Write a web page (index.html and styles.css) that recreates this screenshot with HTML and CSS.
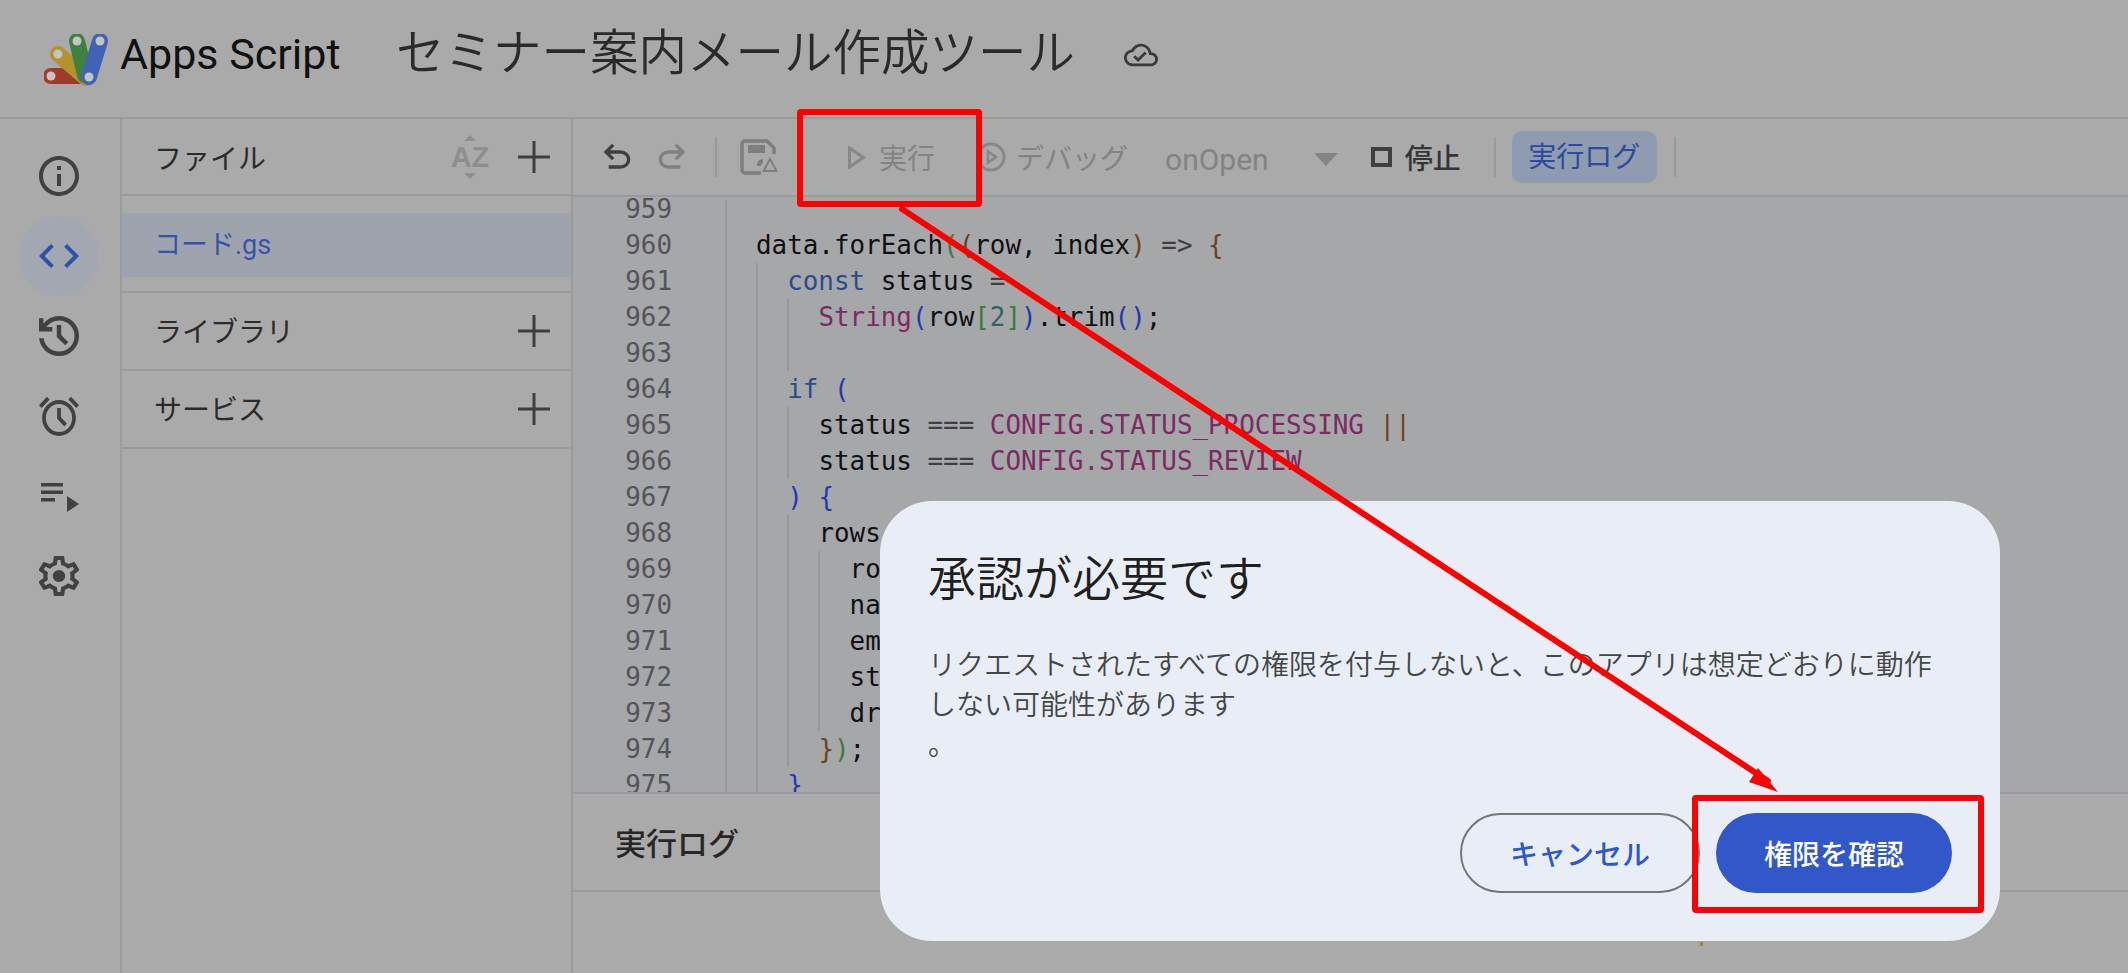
FILE: index.html
```html
<!DOCTYPE html>
<html lang="ja">
<head>
<meta charset="utf-8">
<title>Apps Script</title>
<link rel="stylesheet" href="styles.css">
</head>
<body>
<div class="app">
  <header class="topbar">
    <svg class="logo" viewBox="44 33 64 52" width="64" height="52">
      <path d="M51 75H86" stroke="#a03a2f" stroke-width="16" stroke-linecap="round"/>
      <path d="M58 53L86 77" stroke="#b3932e" stroke-width="16" stroke-linecap="round"/>
      <path d="M77 40L85 74" stroke="#3f8043" stroke-width="16" stroke-linecap="round"/>
      <path d="M100 40L89 76" stroke="#4263b5" stroke-width="16" stroke-linecap="round"/>
      <circle cx="51" cy="75" r="4.5" fill="#c4c4c4"/><circle cx="58" cy="53" r="4.5" fill="#c4c4c4"/>
      <circle cx="77" cy="40" r="4.5" fill="#c4c4c4"/><circle cx="100" cy="40" r="4.5" fill="#c4c4c4"/>
      <circle cx="89" cy="76" r="4.5" fill="#c4c4c4"/>
    </svg>
    <span class="appname">Apps Script</span>
    <h1 class="doctitle">セミナー案内メール作成ツール</h1>
    <svg class="cloud" viewBox="0 0 24 24" width="34" height="34"><path d="M19.35 10.04C18.67 6.59 15.64 4 12 4 9.11 4 6.6 5.64 5.35 8.04 2.34 8.36 0 10.91 0 14c0 3.31 2.69 6 6 6h13c2.76 0 5-2.24 5-5 0-2.64-2.05-4.78-4.65-4.96zM19 18H6c-2.21 0-4-1.79-4-4 0-2.05 1.53-3.76 3.56-3.97l1.07-.11.5-.95C8.08 7.14 9.94 6 12 6c2.62 0 4.88 1.86 5.39 4.43l.3 1.5 1.53.11c1.56.1 2.78 1.41 2.78 2.96 0 1.65-1.35 3-3 3zm-9-3.82l-2.09-2.09L6.5 13.5 10 17l6.01-6.01-1.41-1.41z"/></svg>
  </header>

  <div class="main">
    <nav class="rail">
      <svg class="rail-icon" viewBox="2 2 20 20"><path d="M11 7h2v2h-2zm0 4h2v6h-2zm1-9C6.48 2 2 6.48 2 12s4.48 10 10 10 10-4.48 10-10S17.52 2 12 2zm0 18c-4.41 0-8-3.59-8-8s3.59-8 8-8 8 3.59 8 8-3.59 8-8 8z"/></svg>
      <div class="rail-active"><svg class="rail-icon code-icon" viewBox="2 6 20 12"><path d="M9.4 16.6L4.8 12l4.6-4.6L8 6l-6 6 6 6 1.4-1.4zm5.2 0l4.6-4.6-4.6-4.6L16 6l6 6-6 6-1.4-1.4z"/></svg></div>
      <svg class="rail-icon" viewBox="3 3 18 18"><path d="M12 21q-3.45 0-6.012-2.288T3.05 13H5.1q.35 2.6 2.313 4.3T12 19q2.925 0 4.963-2.038T19 12q0-2.925-2.038-4.963T12 5q-1.725 0-3.225.8T6.25 8H9v2H3V4h2v2.35q1.275-1.6 3.113-2.475T12 3q3.75 0 6.375 2.625T21 12q0 3.75-2.625 6.375T12 21Zm2.8-4.8L11 12.4V7h2v4.6l3.2 3.2-1.4 1.4Z"/></svg>
      <svg class="rail-icon" viewBox="1.35 2 21.3 20" preserveAspectRatio="none"><path d="M12 22q-1.875 0-3.512-.712t-2.85-1.925q-1.213-1.213-1.925-2.85T3 13q0-1.875.713-3.513t1.925-2.85q1.212-1.212 2.85-1.925T12 4q1.875 0 3.513.712t2.85 1.925q1.212 1.213 1.925 2.85T21 13q0 1.875-.712 3.513t-1.925 2.85q-1.213 1.212-2.85 1.925T12 22Zm2.8-4.8 1.4-1.4-3.2-3.2V8h-2v5.4l3.8 3.8ZM5.6 2.35 7 3.75 2.75 8 1.35 6.6 5.6 2.35Zm12.8 0 4.25 4.25L21.25 8 17 3.75l1.4-1.4ZM12 20q2.925 0 4.963-2.037T19 13q0-2.925-2.037-4.963T12 6Q9.075 6 7.037 8.037T5 13q0 2.925 2.038 4.963T12 20Z"/></svg>
      <svg class="rail-icon" viewBox="0 0 40 40"><path d="M2 7h22v3.500H2zM2 14.500h22v3.500H2zM2 22h14v3.500H2zM28 20l12 8-12 8z"/></svg>
      <svg class="rail-icon" viewBox="2.4 2 19.200 20" preserveAspectRatio="none"><path d="M19.43 12.98c.04-.32.07-.64.07-.98 0-.34-.03-.66-.07-.98l2.11-1.65c.19-.15.24-.42.12-.64l-2-3.46c-.09-.16-.26-.25-.44-.25-.06 0-.12.01-.17.03l-2.49 1c-.52-.4-1.08-.73-1.69-.98l-.38-2.65C14.46 2.18 14.25 2 14 2h-4c-.25 0-.46.18-.49.42l-.38 2.65c-.61.25-1.17.59-1.69.98l-2.49-1c-.06-.02-.12-.03-.18-.03-.17 0-.34.09-.43.25l-2 3.46c-.13.22-.07.49.12.64l2.11 1.65c-.04.32-.07.65-.07.98 0 .33.03.66.07.98l-2.11 1.65c-.19.15-.24.42-.12.64l2 3.46c.09.16.26.25.44.25.06 0 .12-.01.17-.03l2.49-1c.52.4 1.08.73 1.69.98l.38 2.65c.03.24.24.42.49.42h4c.25 0 .46-.18.49-.42l.38-2.65c.61-.25 1.17-.59 1.69-.98l2.49 1c.06.02.12.03.18.03.17 0 .34-.09.43-.25l2-3.46c.12-.22.07-.49-.12-.64l-2.11-1.65zm-1.98-1.71c.04.31.05.52.05.73 0 .21-.02.43-.05.73l-.14 1.13.89.7 1.08.84-.7 1.21-1.27-.51-1.04-.42-.9.68c-.43.32-.84.56-1.25.73l-1.06.43-.16 1.13-.2 1.35h-1.4l-.19-1.35-.16-1.13-1.06-.43c-.43-.18-.83-.41-1.23-.71l-.91-.7-1.06.43-1.27.51-.7-1.21 1.08-.84.89-.7-.14-1.13c-.03-.31-.05-.54-.05-.74s.02-.43.05-.73l.14-1.13-.89-.7-1.08-.84.7-1.21 1.27.51 1.04.42.9-.68c.43-.32.84-.56 1.25-.73l1.06-.43.16-1.13.2-1.35h1.39l.19 1.35.16 1.13 1.06.43c.43.18.83.41 1.23.71l.91.7 1.06-.43 1.27-.51.7 1.21-1.07.85-.89.7.14 1.13z"/><circle cx="12" cy="12" r="3"/></svg>
    </nav>

    <aside class="files">
      <div class="panel-head files-head">
        <span class="panel-title">ファイル</span>
        <span class="az"><i class="az-up"></i><b>AZ</b><i class="az-down"></i></span>
        <svg class="plus" viewBox="0 0 32 32"><path d="M14.500 0h3v14.500H32v3H17.500V32h-3V17.500H0v-3h14.500z"/></svg>
      </div>
      <div class="file-list"><div class="file-row">コード.gs</div></div>
      <div class="panel-head section">
        <span class="panel-title">ライブラリ</span>
        <svg class="plus" viewBox="0 0 32 32"><path d="M14.500 0h3v14.500H32v3H17.500V32h-3V17.500H0v-3h14.500z"/></svg>
      </div>
      <div class="panel-head section">
        <span class="panel-title">サービス</span>
        <svg class="plus" viewBox="0 0 32 32"><path d="M14.500 0h3v14.500H32v3H17.500V32h-3V17.500H0v-3h14.500z"/></svg>
      </div>
    </aside>

    <section class="editor">
      <div class="toolbar">
        <svg class="tool undo" viewBox="0 0 24 24"><path d="M7 19v-2h7.100q1.575 0 2.738-1T18 13.500q0-1.500-1.162-2.500T14.100 10H7.800l2.600 2.600L9 14 4 9l5-5 1.400 1.400L7.800 8h6.300q2.425 0 4.163 1.575T20 13.500q0 2.350-1.737 3.925T14.100 19H7Z"/></svg>
        <svg class="tool redo" viewBox="0 0 24 24"><path d="M9.900 19q-2.425 0-4.162-1.575T4 13.500q0-2.350 1.738-3.925T9.900 8h6.300l-2.600-2.600L15 4l5 5-5 5-1.400-1.400 2.600-2.600H9.900q-1.575 0-2.738 1T6 13.500Q6 15 7.163 16T9.900 17H17v2H9.900Z"/></svg>
        <i class="tool-div first"></i>
        <svg class="save" viewBox="0 0 38 36" width="38" height="36">
          <path d="M21 34H5a3 3 0 0 1-3-3V5a3 3 0 0 1 3-3h22l7 7v6" fill="none" stroke="#7e7e7e" stroke-width="3.500"/>
          <rect x="8" y="6" width="17" height="8" fill="#7e7e7e"/>
          <path d="M17 27a6 6 0 0 1 6-7v4a3 3 0 0 0-2 3z" fill="#7e7e7e"/>
          <path d="M30 20l6.500 12h-13z" fill="none" stroke="#7e7e7e" stroke-width="2"/>
        </svg>
        <svg class="play" viewBox="0 0 18 23" width="18" height="23"><path d="M1.500 2l14 9.500-14 9.500z" fill="none" stroke="#878787" stroke-width="3"/></svg>
        <span class="tool-label run">実行</span>
        <svg class="debug" viewBox="0 0 30 30" width="30" height="30"><circle cx="15" cy="15" r="13" fill="none" stroke="#878787" stroke-width="3"/><path d="M12 9.500l8 5.500-8 5.500z" fill="none" stroke="#878787" stroke-width="2.500"/></svg>
        <span class="tool-label dbg">デバッグ</span>
        <span class="tool-label fn">onOpen</span>
        <i class="caret"></i>
        <i class="stop-box"></i>
        <span class="tool-label stop">停止</span>
        <i class="tool-div second"></i>
        <span class="log-toggle">実行ログ</span>
        <i class="tool-div third"></i>
      </div>

      <div class="code-view">
        <div class="gutter">
          <div>959</div><div>960</div><div>961</div><div>962</div><div>963</div><div>964</div><div>965</div><div>966</div><div>967</div><div>968</div><div>969</div><div>970</div><div>971</div><div>972</div><div>973</div><div>974</div><div>975</div>
        </div>
        <div class="lines">
          <div class="ln ln-first"></div>
          <div class="ln">data.forEach<span class="grn">(</span><span class="bwn">(</span>row, index<span class="bwn">)</span> <span class="op">=&gt;</span> <span class="bwn">{</span></div>
          <div class="ln"><i class="g"></i><span class="kw">const</span> status <span class="op">=</span></div>
          <div class="ln"><i class="g"></i><i class="g"></i><span class="fn-c">String</span><span class="blu">(</span>row<span class="grn">[</span><span class="num">2</span><span class="grn">]</span><span class="blu">)</span>.trim<span class="blu">()</span>;</div>
          <div class="ln"><i class="g"></i><i class="g"></i></div>
          <div class="ln"><i class="g"></i><span class="kw">if</span> <span class="blu">(</span></div>
          <div class="ln"><i class="g"></i><i class="g"></i>status <span class="op">===</span> <span class="fn-c">CONFIG.STATUS_PROCESSING</span> <span class="bwn">||</span></div>
          <div class="ln"><i class="g"></i><i class="g"></i>status <span class="op">===</span> <span class="fn-c">CONFIG.STATUS_REVIEW</span></div>
          <div class="ln"><i class="g"></i><span class="blu">)</span> <span class="blu">{</span></div>
          <div class="ln"><i class="g"></i><i class="g"></i>rows</div>
          <div class="ln"><i class="g"></i><i class="g"></i><i class="g"></i>ro</div>
          <div class="ln"><i class="g"></i><i class="g"></i><i class="g"></i>na</div>
          <div class="ln"><i class="g"></i><i class="g"></i><i class="g"></i>em</div>
          <div class="ln"><i class="g"></i><i class="g"></i><i class="g"></i>st</div>
          <div class="ln"><i class="g"></i><i class="g"></i><i class="g"></i>dr</div>
          <div class="ln"><i class="g"></i><i class="g"></i><span class="bwn">}</span><span class="grn">)</span>;</div>
          <div class="ln"><i class="g"></i><span class="blu">}</span></div>
        </div>
      </div>

      <div class="log-panel">
        <div class="log-head">実行ログ</div>
        <div class="log-body"><i class="log-mark"></i></div>
      </div>
    </section>
  </div>

  <div class="dialog">
    <h2 class="dialog-title">承認が必要です</h2>
    <p class="dialog-text">リクエストされたすべての権限を付与しないと、このアプリは想定どおりに動作<br>しない可能性があります<br>。</p>
    <div class="dialog-actions">
      <button class="btn btn-outline">キャンセル</button>
      <button class="btn btn-primary">権限を確認</button>
    </div>
  </div>

  <svg class="annot" viewBox="0 0 2128 973" width="2128" height="973">
    <rect class="box" x="800" y="112" width="179" height="92" rx="1"/>
    <rect class="box" x="1695" y="798" width="286" height="112" rx="1"/>
    <path class="arrow-line" d="M902 209L1768 781"/>
    <path class="arrow-head" d="M1778 792L1749 782 1758 768z"/>
  </svg>
</div>
</body>
</html>
```
FILE: styles.css
```css
* { box-sizing: border-box; }
html, body { margin: 0; height: 100%; }
body {
  background: #aaaaaa;
  color: #2b2b2b;
  font-family: Roboto, "Noto Sans CJK JP", sans-serif;
  overflow: hidden;
}
.app {
  position: relative;
  width: 2128px;
  height: 973px;
  display: flex;
  flex-direction: column;
  overflow: hidden;
}

/* header */
.topbar {
  height: 119px;
  flex: none;
  display: flex;
  align-items: center;
  padding-left: 44px;
  border-bottom: 2px solid #9a9b9f;
}
.logo { flex: none; fill: none; margin-top: 2px; }
.appname {
  margin-left: 12px;
  margin-top: -9px;
  width: 276px;
  font-size: 43px;
  color: #111;
}
.doctitle {
  margin: -20px 0 0 0;
  width: 728px;
  font-size: 48.500px;
  font-weight: 350;
  color: #2a2a2a;
  white-space: nowrap;
}
.cloud { flex: none; fill: #3a3a3c; margin-top: -8px; }

/* layout */
.main { flex: 1; display: flex; min-height: 0; }

/* rail */
.rail {
  width: 122px;
  flex: none;
  border-right: 2px solid #9a9b9f;
  display: flex;
  flex-direction: column;
  align-items: center;
  padding-right: 2px;
  padding-top: 37px;
}
.rail-icon { width: 40px; height: 40px; fill: #414144; flex: none; margin-bottom: 40px; }
.rail > .rail-icon:first-child { margin-bottom: 20px; }
.rail-active {
  width: 80px;
  height: 80px;
  border-radius: 50%;
  background: #a2a7b2;
  display: flex;
  align-items: center;
  justify-content: center;
  margin-bottom: 20px;
  flex: none;
}
.rail-active .code-icon { margin: 0; fill: #2f50a8; height: 24px; }

/* files panel */
.files {
  width: 451px;
  flex: none;
  border-right: 2px solid #9a9b9f;
}
.panel-head {
  display: flex;
  align-items: center;
  padding: 0 21px 0 32px;
  height: 78px;
  border-bottom: 2px solid #9a9b9f;
}
.files-head { height: 77px; }
.panel-title { font-size: 28px; color: #2b2b2b; flex: 1; margin-top: -2px; }
.files-head .panel-title { margin-top: 0; }
.plus { width: 32px; height: 32px; fill: #3f3f42; flex: none; }
.az {
  width: 40px;
  margin-right: 28px;
  display: flex;
  flex-direction: column;
  align-items: center;
  color: #8e8e8f;
}
.az b { font: 700 29px/24px "Liberation Sans", sans-serif; }
.az-up, .az-down { width: 0; height: 0; border-left: 6px solid transparent; border-right: 6px solid transparent; }
.az-up { border-bottom: 6px solid #8e8e8f; margin-bottom: 4px; }
.az-down { border-top: 6px solid #8e8e8f; margin-top: 4px; }
.file-list { padding: 17px 0 14px; border-bottom: 2px solid #9a9b9f; }
.file-row {
  height: 64px;
  line-height: 65px;
  padding-left: 32px;
  background: #9fa3ae;
  color: #3854a8;
  font-size: 27px;
}

/* editor */
.editor { flex: 1; min-width: 0; display: flex; flex-direction: column; }
.toolbar {
  height: 78px;
  flex: none;
  display: flex;
  align-items: center;
  border-bottom: 2px solid #9a9b9f;
}
.tool { width: 40px; height: 40px; flex: none; }
.undo { fill: #3f3f42; margin-left: 24px; }
.redo { fill: #808082; margin-left: 15px; }
.tool-div { width: 2px; height: 40px; background: #98999c; flex: none; }
.tool-div.first { margin-left: 23px; }
.save { flex: none; margin-left: 23px; }
.play { flex: none; margin-left: 70px; }
.debug { flex: none; margin-left: 41px; }
.tool-label { font-size: 28px; color: #838383; white-space: nowrap; flex: none; line-height: 40px; margin-top: 6px; }
.run { margin-left: 13px; }
.dbg { margin-left: 10px; }
.fn { margin-left: 37px; font-size: 30px; }
.caret {
  width: 0; height: 0; flex: none;
  margin-left: 45px;
  border-left: 12px solid transparent;
  border-right: 12px solid transparent;
  border-top: 13px solid #858585;
  margin-top: 4px;
}
.stop-box { width: 21px; height: 20px; border: 4px solid #3f3f42; flex: none; margin-left: 33px; }
.stop { margin-left: 13px; color: #353537; font-weight: 500; }
.tool-div.second { margin-left: 33px; }
.log-toggle {
  margin-left: 16px;
  width: 145px;
  height: 52px;
  line-height: 54px;
  text-align: center;
  border-radius: 10px;
  background: #8f9bb0;
  color: #2d4a9c;
  font-size: 28px;
  flex: none;
}
.tool-div.third { margin-left: 17px; }

/* code */
.code-view {
  flex: 1;
  min-height: 0;
  overflow: hidden;
  display: flex;
  background: #a6a7a9;
  font-family: "DejaVu Sans Mono", monospace;
  font-size: 25.9px;
  line-height: 36px;
  color: #101012;
}
.gutter {
  width: 152px;
  flex: none;
  margin-top: -6px;
  padding-right: 53px;
  text-align: right;
  color: #545456;
}
.lines {
  flex: 1;
  border-left: 2px solid #97989b;
  margin-top: 3px;
  padding-left: 29px;
}
.ln-first { height: 27px; }
.ln { white-space: pre; min-height: 27px; }
.g {
  display: inline-block;
  vertical-align: top;
  width: 31.2px;
  height: 36px;
  border-left: 2px solid #97989b;
}
.kw { color: #2c4a8e; }
.fn-c { color: #7d2a63; }
.num { color: #2f6468; }
.op { color: #3f3f42; }
.blu { color: #2a35b0; }
.grn { color: #3c7a3c; }
.bwn { color: #6b4220; }

/* log */
.log-panel { height: 181px; flex: none; border-top: 2px solid #9a9b9f; background: #aaaaaa; }
.log-head {
  height: 98px;
  line-height: 102px;
  padding-left: 42px;
  font-size: 31px;
  font-weight: 500;
  border-bottom: 2px solid #9a9b9f;
  color: #272727;
}
.log-body { padding: 50px 0 0 1127px; }
.log-mark { display: block; width: 3px; height: 4px; background: #a58430; }

/* dialog */
.dialog {
  position: absolute;
  left: 880px;
  top: 501px;
  width: 1120px;
  height: 440px;
  padding: 47px 48px 48px;
  background: #e9eef6;
  border-radius: 52px;
  display: flex;
  flex-direction: column;
}
.dialog-title { margin: 0; font-size: 48px; line-height: 64px; font-weight: 350; color: #1f1f1f; }
.dialog-text { margin: 34px 0 0 0; font-size: 28px; line-height: 40px; font-weight: 350; color: #444746; white-space: nowrap; }
.dialog-actions { margin-top: auto; display: flex; justify-content: flex-end; gap: 16px; }
.btn {
  height: 80px;
  border-radius: 40px;
  font-family: Roboto, "Noto Sans CJK JP", sans-serif;
  font-size: 28px;
  font-weight: 500;
  padding: 0;
  cursor: pointer;
}
.btn-outline { width: 240px; background: transparent; border: 2px solid #747775; color: #2f58c8; }
.btn-primary { width: 236px; background: #3157c8; border: none; color: #fff; }

/* annotations */
.annot { position: absolute; left: 0; top: 0; pointer-events: none; }
.box { fill: none; stroke: #ff0000; stroke-width: 6; }
.arrow-line { stroke: #ff0000; stroke-width: 6; fill: none; stroke-linecap: round; }
.arrow-head { fill: #ff0000; }
```
